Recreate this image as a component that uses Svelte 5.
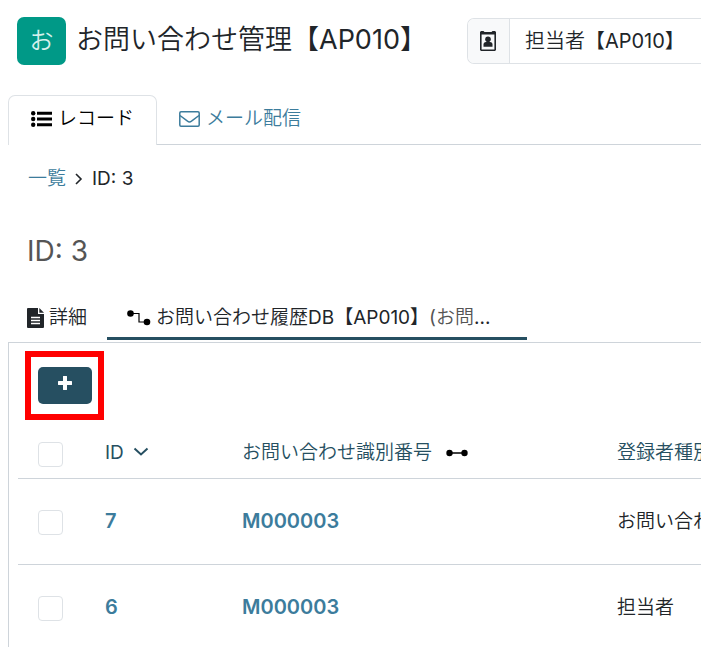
<script>
  let keyword = '担当者【AP010】';
  let allChecked = false;

  let rows = [
    { id: 7, code: 'M000003', type: 'お問い合わせ者', checked: false },
    { id: 6, code: 'M000003', type: '担当者', checked: false },
  ];

  function toggleAll() {
    rows = rows.map((row) => ({ ...row, checked: allChecked }));
  }
</script>

<main>
  <header>
    <span class="logo">お</span>
    <h1>お問い合わせ管理【AP010】</h1>
    <label class="account">
      <span class="addon">
        <svg width="16" height="20" viewBox="0 0 16 20" aria-hidden="true">
          <path d="M1 0h2.500l1 1h7l1-1H15l1 1v18l-1 1H1l-1-1V1z" fill="#212529" />
          <path d="M1.600 3.500h12.800v14.900H1.600z" fill="#f8f9fa" />
          <circle cx="8" cy="8.200" r="2.800" fill="#212529" />
          <path d="M3.500 15.800v-2.300q0-2.500 2.500-2.500h4q2.500 0 2.500 2.500v2.300z" fill="#212529" />
        </svg>
      </span>
      <input type="text" bind:value={keyword} aria-label="担当者" />
    </label>
  </header>

  <nav class="tabs">
    <a class="tab active" href="#record">
      <svg width="21" height="16" viewBox="0 0 21 16" aria-hidden="true">
        <circle cx="2.200" cy="2.200" r="2.200" />
        <circle cx="2.200" cy="8" r="2.200" />
        <circle cx="2.200" cy="13.800" r="2.200" />
        <path d="M6 .8h15v3H6zM6 6.500h15v3H6zM6 12.300h15v3H6z" />
      </svg>
      レコード
    </a>
    <a class="tab" href="#mail">
      <svg width="21" height="16" viewBox="0 0 21 16" fill="none" stroke="currentColor" stroke-width="1.500" aria-hidden="true">
        <rect x=".8" y=".8" width="19.400" height="14.400" rx="1.200" />
        <path d="M1 4.500l7.500 5.700q2 1.400 4 0L20 4.500" />
      </svg>
      メール配信
    </a>
  </nav>

  <nav class="breadcrumb">
    <a href="#list">一覧</a>
    <svg width="8" height="12" viewBox="0 0 8 12" fill="none" stroke="#212529" stroke-width="1.600" aria-hidden="true">
      <path d="M1 1l5 5-5 5" />
    </svg>
    <span>ID: 3</span>
  </nav>

  <h2>ID: 3</h2>

  <nav class="subtabs">
    <a href="#detail">
      <svg width="17" height="20" viewBox="0 0 17 20" aria-hidden="true">
        <g fill="#212529">
          <path d="M1 0h10v6h6v13q0 1-1 1H1q-1 0-1-1V1q0-1 1-1z" />
          <path d="M12.300 0L17 4.800h-4.700z" />
        </g>
        <path d="M4 9.500h9M4 12.500h9M4 15.500h9" stroke="#fff" stroke-width="1.300" />
      </svg>
      詳細
    </a>
    <a class="current" href="#history">
      <svg width="24" height="16" viewBox="0 0 24 16" aria-hidden="true">
        <circle cx="3.500" cy="3.500" r="3.300" />
        <circle cx="20" cy="12" r="3.300" />
        <path d="M4 3.500h8v8.500h8" fill="none" stroke="#000" stroke-width="1.200" />
      </svg>
      <span class="ellipsis">お問い合わせ履歴DB【AP010】<small>(お問</small>...</span>
    </a>
  </nav>

  <section>
    <div class="highlight">
      <button aria-label="追加">
        <svg width="14" height="14" viewBox="0 0 14 14" aria-hidden="true">
          <path d="M7 1v12M1 7h12" stroke="#fff" stroke-width="4" stroke-linecap="round" />
        </svg>
      </button>
    </div>

    <table>
      <thead>
        <tr>
          <th class="check"><input type="checkbox" bind:checked={allChecked} on:change={toggleAll} aria-label="すべて選択" /></th>
          <th class="id">
            ID
            <svg class="sort" width="16" height="10" viewBox="0 0 16 10" fill="none" stroke="#264f61" stroke-width="2" aria-hidden="true">
              <path d="M1.500 1.500l6.500 6 6.500-6" />
            </svg>
          </th>
          <th class="code">
            お問い合わせ識別番号
            <svg class="relation" width="22" height="8" viewBox="0 0 22 8" aria-hidden="true">
              <circle cx="3.500" cy="4" r="3.200" />
              <circle cx="18.500" cy="4" r="3.200" />
              <path d="M3 4h16" stroke="#000" stroke-width="1.500" />
            </svg>
          </th>
          <th>登録者種別</th>
        </tr>
      </thead>
      <tbody>
        {#each rows as row (row.id)}
          <tr>
            <td class="check"><input type="checkbox" bind:checked={row.checked} aria-label={`ID ${row.id}`} /></td>
            <td><a href={`#${row.id}`}>{row.id}</a></td>
            <td><a href={`#${row.id}`}>{row.code}</a></td>
            <td>{row.type}</td>
          </tr>
        {/each}
      </tbody>
    </table>
  </section>
</main>

<style>
  :global(body) {
    background-color: #fff;
  }

  main {
    padding: 17px 0 0 8px;
    min-height: 100vh;
    box-sizing: border-box;
    display: flex;
    flex-direction: column;
    overflow: hidden;
    font-family: Inter, 'Noto Sans CJK JP DemiLight', 'Noto Sans CJK JP Light', 'Noto Sans CJK JP', sans-serif;
    font-size: 19px;
    font-weight: 400;
    line-height: 28px;
    color: #212529;
    white-space: nowrap;
  }

  a {
    color: #3c7c9c;
    text-decoration: none;
  }

  svg {
    flex: none;
  }

  header {
    display: flex;
    align-items: center;
    height: 48px;
    padding-left: 9px;
  }

  .logo {
    display: flex;
    align-items: center;
    justify-content: center;
    width: 49px;
    height: 48px;
    border-radius: 7px;
    background-color: #009987;
    color: #d5f0ec;
    font-size: 24px;
  }

  h1 {
    margin: 0 40px 2px 10px;
    font-size: 27px;
    font-weight: 400;
    line-height: 40px;
  }

  .account {
    display: flex;
    flex: 1;
    height: 44px;
    border: 1px solid #dee2e6;
    border-right: 0;
    border-radius: 7px 0 0 7px;
    overflow: hidden;
  }

  .addon {
    display: flex;
    align-items: center;
    justify-content: center;
    width: 41px;
    border-right: 1px solid #dee2e6;
    background-color: #f8f9fa;
  }

  .account input {
    flex: 1;
    min-width: 0;
    padding: 0 0 0 15px;
    border: 0;
    outline: 0;
    font: inherit;
    font-size: 20px;
    color: inherit;
  }

  .tabs {
    display: flex;
    height: 50px;
    margin-top: 30px;
    box-shadow: inset 0 -1px #ced4da;
  }

  .tab {
    display: flex;
    align-items: center;
    gap: 6px;
    padding: 0 22px 3px;
    border: 1px solid transparent;
    border-bottom: 0;
  }

  .tab.active {
    border-color: #dee2e6;
    border-radius: 7px 7px 0 0;
    background-color: #fff;
    color: #000;
  }

  .tab + .tab {
    padding-left: 21px;
  }

  .breadcrumb {
    display: flex;
    align-items: center;
    gap: 9px;
    margin: 20px 0 0 20px;
  }

  h2 {
    margin: 36px 0 0 19px;
    font-size: 28px;
    font-weight: 400;
    line-height: 44px;
    color: #555;
  }

  .subtabs {
    display: flex;
    height: 42px;
    margin: 25px 0 2px 19px;
  }

  .subtabs a {
    display: flex;
    align-items: center;
    gap: 5px;
    padding: 0 20px 3px 0;
    color: #212529;
  }

  .subtabs .current {
    width: 381px;
    padding: 0 19px 0 20px;
    border-bottom: 3px solid #264f61;
  }

  .ellipsis {
    overflow: hidden;
  }

  small {
    font-size: 19px;
    color: #555;
  }

  section {
    flex: 1;
    padding: 8px 0 0 9px;
    border: solid #ced4da;
    border-width: 1px 0 0 1px;
  }

  .highlight {
    width: fit-content;
    margin-left: 7px;
    padding: 10px 6px 10px 7px;
    border: 6px solid #f00;
  }

  button {
    display: flex;
    justify-content: center;
    width: 54px;
    height: 37px;
    padding: 9px 0 0;
    border: 0;
    border-radius: 5px;
    background-color: #264f61;
    cursor: pointer;
  }

  table {
    width: 900px;
    border-collapse: collapse;
    table-layout: fixed;
  }

  tr {
    height: 86px;
    border-bottom: 1px solid #ced4da;
  }

  thead tr {
    height: 58px;
  }

  th {
    padding: 8px 0 0 1px;
    text-align: left;
    font-weight: 400;
    color: #264f61;
  }

  td {
    padding: 1px 0 0 1px;
  }

  th.check {
    width: 66px;
    padding-top: 12px;
  }

  th.id {
    width: 136px;
  }

  th.code {
    width: 374px;
  }

  .check {
    padding: 3px 0 0 20px;
  }

  td a {
    font-size: 20px;
    font-weight: 600;
  }

  .sort {
    margin-left: 4px;
    vertical-align: 2px;
  }

  .relation {
    margin-left: 9px;
    vertical-align: 2px;
  }

  input[type='checkbox'] {
    display: block;
    appearance: none;
    box-sizing: border-box;
    width: 25px;
    height: 25px;
    margin: 0;
    border: 1px solid #dee2e6;
    border-radius: 4px;
    background-color: #fff;
  }

  input[type='checkbox']:checked {
    background-color: #264f61;
  }
</style>
